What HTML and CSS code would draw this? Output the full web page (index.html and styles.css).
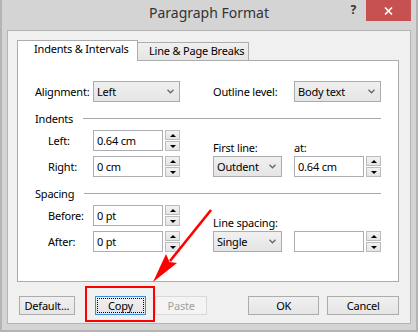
FILE: index.html
```html
<!DOCTYPE html>
<html lang="en">
<head>
    <meta charset="UTF-8">
    <meta name="viewport" content="width=device-width, initial-scale=1.0">
    <title>Paragraph Format</title>
    <link rel="stylesheet" href="styles.css">
</head>
<body>

    <div class="window">
        <div class="titlebar">
            <div></div>
            <div class="title">Paragraph Format</div>
            <div class="caption-btns">
                <span class="help">?</span>
                <span class="close">
                    <svg width="9" height="8" viewBox="0 0 9 8"><path d="M1 0.5 L8 7.5 M8 0.5 L1 7.5" stroke="#fff" stroke-width="1.6"/></svg>
                </span>
            </div>
        </div>

        <div class="client">
            <div class="tabs">
                <div class="tab active">Indents &amp; Intervals</div>
                <div class="tab">Line &amp; Page Breaks</div>
            </div>

            <div class="panel">
                <div class="top-row">
                    <label class="lbl-align">Alignment:</label>
                    <div class="combo wide">
                        <span>Left</span>
                        <svg width="7" height="5" viewBox="0 0 7 5"><polyline points="0.5,0.8 3.5,3.8 6.5,0.8" fill="none" stroke="#666" stroke-width="1.3"/></svg>
                    </div>
                    <label class="lbl-outline">Outline level:</label>
                    <div class="combo wide">
                        <span>Body text</span>
                        <svg width="7" height="5" viewBox="0 0 7 5"><polyline points="0.5,0.8 3.5,3.8 6.5,0.8" fill="none" stroke="#666" stroke-width="1.3"/></svg>
                    </div>
                </div>

                <!-- Indents -->
                <div class="group-head"><span>Indents</span><i class="rule"></i></div>
                <div class="group">
                    <label class="lbl c1 r1">Left:</label>
                    <input class="field c2 r1" type="text" value="0.64 cm">
                    <div class="spin c3 r1"><span class="up"></span><span class="down"></span></div>
                    <label class="lbl-top c5 r1">First line:</label>
                    <label class="lbl-top c7 r1">at:</label>

                    <label class="lbl c1 r2">Right:</label>
                    <input class="field c2 r2" type="text" value="0 cm">
                    <div class="spin c3 r2"><span class="up"></span><span class="down"></span></div>
                    <div class="combo c5 r2">
                        <span>Outdent</span>
                        <svg width="7" height="5" viewBox="0 0 7 5"><polyline points="0.5,0.8 3.5,3.8 6.5,0.8" fill="none" stroke="#666" stroke-width="1.3"/></svg>
                    </div>
                    <input class="field c7 r2" type="text" value="0.64 cm">
                    <div class="spin c8 r2"><span class="up"></span><span class="down"></span></div>
                </div>

                <!-- Spacing -->
                <div class="group-head"><span>Spacing</span><i class="rule"></i></div>
                <div class="group">
                    <label class="lbl c1 r1">Before:</label>
                    <input class="field c2 r1" type="text" value="0 pt">
                    <div class="spin c3 r1"><span class="up"></span><span class="down"></span></div>
                    <label class="lbl-top c5 r1 span3">Line spacing:</label>

                    <label class="lbl c1 r2">After:</label>
                    <input class="field c2 r2" type="text" value="0 pt">
                    <div class="spin c3 r2"><span class="up"></span><span class="down"></span></div>
                    <div class="combo c5 r2">
                        <span>Single</span>
                        <svg width="7" height="5" viewBox="0 0 7 5"><polyline points="0.5,0.8 3.5,3.8 6.5,0.8" fill="none" stroke="#666" stroke-width="1.3"/></svg>
                    </div>
                    <input class="field c7 r2" type="text" value="">
                    <div class="spin c8 r2"><span class="up"></span><span class="down"></span></div>
                </div>
            </div>

            <div class="buttons">
                <button class="btn btn-default">Default...</button>
                <button class="btn btn-copy">Copy</button>
                <button class="btn btn-paste" disabled>Paste</button>
                <button class="btn btn-ok">OK</button>
                <button class="btn btn-cancel">Cancel</button>
            </div>
        </div>
    </div>

    <!-- annotation drawn over the dialog -->
    <div class="highlight"></div>
    <svg class="arrow" width="418" height="332" viewBox="0 0 418 332">
        <line x1="211" y1="210" x2="170" y2="261" stroke="#f00" stroke-width="2.6"/>
        <polygon points="153,282 166,254 169.5,262 177,263" fill="#f00"/>
    </svg>

</body>
</html>
```

FILE: styles.css
```css
body {
    margin: 0;
    position: relative;
    background-color: #ffffff;
    font-family: 'Noto Sans', 'Liberation Sans', sans-serif;
    font-size: 11px;
    letter-spacing: -0.2px;
    color: #000;
}

.window {
    box-sizing: border-box;
    width: 418px;
    height: 332px;
    background-color: #d4d4d4;
    border: 2px solid #b4b4b4;
    border-top: 0;
    padding: 0 5px 6px 5px;
}

/* title bar */
.titlebar {
    height: 30px;
    display: grid;
    grid-template-columns: 1fr auto 1fr;
}

.title {
    font-size: 14px;
    letter-spacing: 0;
    line-height: 26px;
    color: #333;
}

.caption-btns {
    justify-self: end;
    display: flex;
    align-items: flex-start;
}

.help {
    font-weight: bold;
    font-size: 12px;
    line-height: 14px;
    color: #333;
    margin-top: 3px;
    margin-right: 10px;
}

.close {
    width: 45px;
    height: 21px;
    background-color: #c75050;
    display: flex;
    align-items: center;
    justify-content: center;
}

/* client area */
.client {
    box-sizing: border-box;
    height: 294px;
    background-color: #f0f0f0;
    border: 1px solid #b4b4b4;
    padding: 9px 11px 0 9px;
}

.tabs {
    display: flex;
    align-items: flex-end;
    height: 20px;
}

.tab {
    box-sizing: border-box;
    height: 18px;
    width: 112px;
    margin-left: -1px;
    padding-left: 11px;
    line-height: 16px;
    border: 1px solid #acacac;
    border-bottom: 0;
    background: linear-gradient(#f0f0f0, #e5e5e5);
    white-space: nowrap;
}

.tab.active {
    position: relative;
    z-index: 1;
    height: 21px;
    width: 121px;
    margin-left: 0;
    margin-bottom: -1px;
    padding-left: 16px;
    background: #fff;
}

.panel {
    box-sizing: border-box;
    height: 222px;
    background-color: #fff;
    border: 1px solid #acacac;
    padding: 0 17px;
}

.top-row {
    display: flex;
    align-items: center;
    height: 21px;
    margin-top: 20px;
}

.lbl-align {
    width: 58px;
}

.lbl-outline {
    width: 81px;
    margin-left: 33px;
}

.group-head {
    display: flex;
    align-items: center;
    height: 14px;
    margin-top: 9px;
}

.group-head .rule {
    flex: 1;
    height: 1px;
    margin-left: 10px;
    background-color: #a9a9a9;
}

.group {
    display: grid;
    grid-template-columns: 45px 70px 17px 33px 69px 12px 70px 17px;
    grid-template-rows: 21px 21px;
    row-gap: 5px;
    margin-top: 5px;
    margin-left: 13px;
}

.c1 { grid-column: 1; }
.c2 { grid-column: 2; }
.c3 { grid-column: 3; }
.c5 { grid-column: 5; }
.c7 { grid-column: 7; }
.c8 { grid-column: 8; }
.r1 { grid-row: 1; }
.r2 { grid-row: 2; }
.span3 { grid-column: 5 / span 3; }

.lbl {
    line-height: 21px;
}

.lbl-top {
    align-self: end;
    line-height: 14px;
    margin-bottom: -4px;
    white-space: nowrap;
}

/* controls */
.combo {
    box-sizing: border-box;
    height: 21px;
    width: 69px;
    border: 1px solid #acacac;
    background: linear-gradient(#f0f0f0, #e5e5e5);
    display: flex;
    align-items: center;
    justify-content: space-between;
    padding: 0 5px 0 3px;
}

.combo.wide {
    width: 87px;
}

.field {
    box-sizing: border-box;
    height: 21px;
    width: 70px;
    margin: 0;
    border: 1px solid #abadb3;
    padding: 0 3px;
    font-family: inherit;
    font-size: 11px;
    letter-spacing: -0.2px;
    color: #000;
    background: #fff;
    outline: none;
}

.spin {
    justify-self: end;
    width: 15px;
    height: 21px;
    display: flex;
    flex-direction: column;
    gap: 1px;
}

.spin span {
    box-sizing: border-box;
    height: 10px;
    border: 1px solid #bcbcbc;
    background: linear-gradient(#f2f2f2, #e4e4e4);
    display: flex;
    align-items: center;
    justify-content: center;
}

.spin .up::after {
    content: "";
    border-left: 3px solid transparent;
    border-right: 3px solid transparent;
    border-bottom: 3px solid #000;
}

.spin .down::after {
    content: "";
    border-left: 3px solid transparent;
    border-right: 3px solid transparent;
    border-top: 3px solid #000;
}

/* bottom buttons */
.buttons {
    display: flex;
    margin-top: 14px;
    padding-left: 2px;
}

.btn {
    position: relative;
    box-sizing: border-box;
    height: 19px;
    margin: 0;
    padding: 0;
    border: 1px solid #acacac;
    background: linear-gradient(#f0f0f0, #e5e5e5);
    font-family: inherit;
    font-size: 11px;
    letter-spacing: -0.2px;
    color: #000;
}

.btn-default { width: 56px; }
.btn-copy { width: 52px; margin-left: 20px; border-color: #3c8ce0; }
.btn-paste { width: 52px; margin-left: 9px; }
.btn-ok { width: 72px; margin-left: 41px; }
.btn-cancel { width: 72px; margin-left: 8px; }

.btn-copy::after {
    content: "";
    position: absolute;
    inset: 1px;
    border: 1px dotted #000;
}

.btn-paste {
    background: #f4f4f4;
    border-color: #d9d9d9;
    color: #a0a0a0;
}

/* red annotation */
.highlight {
    position: absolute;
    left: 85px;
    top: 286px;
    box-sizing: border-box;
    width: 70px;
    height: 36px;
    border: 2px solid #f00;
}

.arrow {
    position: absolute;
    left: 0;
    top: 0;
    pointer-events: none;
}
```
